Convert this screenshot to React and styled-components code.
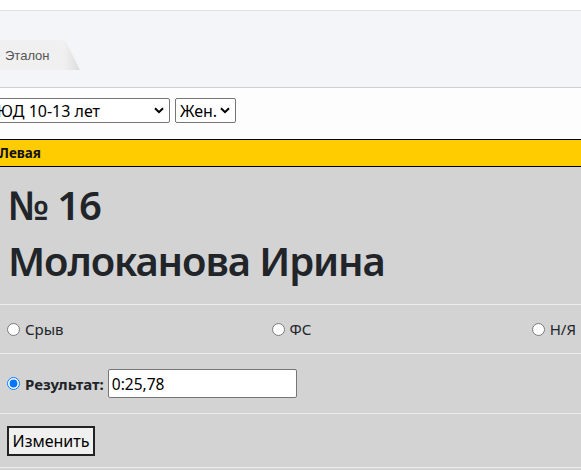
import React from "react";
import styled, { createGlobalStyle } from "styled-components";

const GlobalStyle = createGlobalStyle`
  html, body {
    margin: 0;
    padding: 0;
    background: #d3d3d3;
    overflow: hidden;
  }
  body {
    font-family: "Noto Sans", "Open Sans", sans-serif;
    color: #212529;
  }
`;

const TopStrip = styled.div`
  height: 10px;
  background: #ffffff;
  border-bottom: 1px solid #dfe0e4;
`;

const TabBar = styled.div`
  height: 77px;
  background: #f4f5f9;
  border-bottom: 1px solid #cfcfd2;
  display: flex;
  align-items: flex-end;
  padding-bottom: 17px;
  box-sizing: border-box;
`;

const Tab = styled.div`
  margin-left: -12px;
  height: 30px;
  width: 92px;
  display: flex;
  align-items: center;
  padding-left: 17px;
  box-sizing: border-box;
  font-family: "Liberation Sans", Arial, sans-serif;
  font-size: 13px;
  color: #555;
  background: linear-gradient(90deg, #f0f0f0 0, #f0f0f0 76px, #dcdcdc 92px);
  clip-path: polygon(0 0, 74px 0, 78px 2px, 92px 100%, 0 100%);
`;

const SelectRow = styled.div`
  height: 51px;
  display: flex;
  align-items: flex-start;
  gap: 5px;
  padding-top: 10px;
  box-sizing: border-box;
  background: #fdfdfd;
`;

const SelectWrap = styled.div`
  position: relative;
  margin-left: ${(p) => p.$offset || 0}px;
`;

const Select = styled.select`
  appearance: none;
  -webkit-appearance: none;
  height: 25px;
  width: ${(p) => p.$width}px;
  padding: 0 0 0 ${(p) => p.$pad || 2}px;
  border: 1px solid #767676;
  border-radius: 2px;
  background: #ffffff;
  font-family: "Noto Sans", sans-serif;
  font-size: 16px;
  color: #000;
  outline: none;
`;

const Chevron = styled.svg`
  position: absolute;
  right: 6px;
  top: 9px;
  width: 10px;
  height: 7px;
  pointer-events: none;
`;

const SideBar = styled.div`
  height: 28px;
  background: #ffcc00;
  border-top: 1px solid #000;
  border-bottom: 1px solid #000;
  box-sizing: border-box;
  display: flex;
  align-items: center;
  font-family: "Noto Sans", sans-serif;
  font-weight: bold;
  font-size: 13.5px;
  color: #111;
  text-indent: -1px;
`;

const Card = styled.div`
  background: #d3d3d3;
  padding-top: 14px;
`;

const Heading = styled.h1`
  margin: 0 0 8px 8px;
  font-size: 40px;
  line-height: 48px;
  font-weight: 600;
  letter-spacing: -1.1px;
  color: #212529;
`;

const Row = styled.div`
  border-top: 1px solid #ececec;
  display: flex;
  align-items: center;
  height: ${(p) => p.$height}px;
  padding: 0 5px 0 7px;
  font-size: 15px;
`;

const ChoiceRow = styled(Row)`
  margin-top: 19px;
  display: grid;
  grid-template-columns: 1fr 1fr 1fr;
  align-items: center;
`;

const RadioLabel = styled.label`
  display: flex;
  align-items: center;
  gap: 5px;
  color: #212529;
  font-weight: ${(p) => (p.$bold ? 700 : 400)};
  justify-self: ${(p) => p.$align || "start"};
`;

const Radio = styled.input`
  margin: 0;
  width: 13px;
  height: 13px;
`;

const TextInput = styled.input`
  margin-left: 4px;
  width: 189px;
  height: 29px;
  box-sizing: border-box;
  border: 1px solid #767676;
  border-radius: 2px;
  padding: 0 3px;
  font-family: "Noto Sans", sans-serif;
  font-size: 15.5px;
  color: #000;
  background: #fff;
  outline: none;
`;

const Button = styled.button`
  height: 30px;
  width: 88px;
  background: #f0f0f0;
  border: 2px solid #222;
  border-radius: 0;
  font-family: "Noto Sans", sans-serif;
  font-size: 16px;
  color: #000;
  padding: 0;
`;

const ChevronIcon = () => (
  <Chevron viewBox="0 0 10 7">
    <path d="M1 1.2 L5 5.2 L9 1.2" fill="none" stroke="#000" strokeWidth="2" />
  </Chevron>
);

export default function App() {
  return (
    <>
      <GlobalStyle />
      <TopStrip />
      <TabBar>
        <Tab>Эталон</Tab>
      </TabBar>
      <SelectRow>
        <SelectWrap $offset={-10}>
          <Select $width={180} $pad={6} defaultValue="yd">
            <option value="yd">ЮД 10-13 лет</option>
          </Select>
          <ChevronIcon />
        </SelectWrap>
        <SelectWrap>
          <Select $width={61} $pad={4} defaultValue="f">
            <option value="f">Жен.</option>
          </Select>
          <ChevronIcon />
        </SelectWrap>
      </SelectRow>
      <SideBar>Левая</SideBar>
      <Card>
        <Heading>№ 16</Heading>
        <Heading>Молоканова Ирина</Heading>
        <ChoiceRow $height={48}>
          <RadioLabel>
            <Radio type="radio" name="res" />
            Срыв
          </RadioLabel>
          <RadioLabel $align="center">
            <Radio type="radio" name="res" />
            ФС
          </RadioLabel>
          <RadioLabel $align="end">
            <Radio type="radio" name="res" />
            Н/Я
          </RadioLabel>
        </ChoiceRow>
        <Row $height={59}>
          <RadioLabel $bold>
            <Radio type="radio" name="res" defaultChecked />
            Результат:
          </RadioLabel>
          <TextInput defaultValue="0:25,78" />
        </Row>
        <Row $height={53}>
          <Button>Изменить</Button>
        </Row>
        <Row $height={2} />
      </Card>
    </>
  );
}
